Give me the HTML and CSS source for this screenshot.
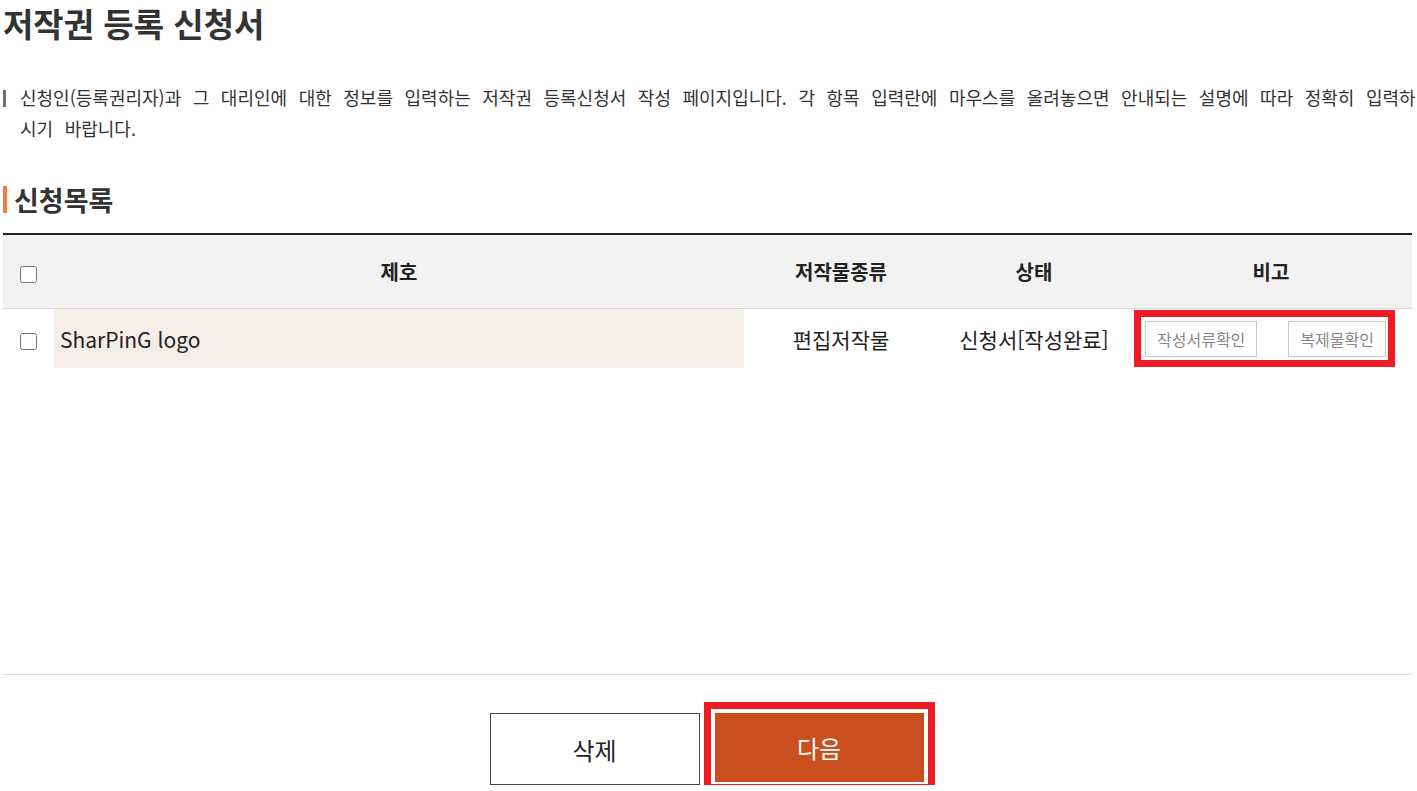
FILE: index.html
```html
<!DOCTYPE html>
<html lang="ko">
<head>
  <meta charset="UTF-8" />
  <title>저작권 등록 신청서</title>
  <link rel="stylesheet" href="styles.css">
</head>
<body>
  <div class="wrap">
    <h1>저작권 등록 신청서</h1>
    <p class="guide">신청인(등록권리자)과 그 대리인에 대한 정보를 입력하는 저작권 등록신청서 작성 페이지입니다. 각 항목 입력란에 마우스를 올려놓으면 안내되는 설명에 따라 정확히 입력하시기 바랍니다.</p>

    <h2 class="sec-title">신청목록</h2>
    <table class="list">
      <colgroup>
        <col class="c-chk" />
        <col class="c-title" />
        <col class="c-type" />
        <col class="c-state" />
        <col class="c-note" />
      </colgroup>
      <thead>
        <tr>
          <th><input type="checkbox" /></th>
          <th>제호</th>
          <th>저작물종류</th>
          <th>상태</th>
          <th>비고</th>
        </tr>
      </thead>
      <tbody>
        <tr>
          <td><input type="checkbox" /></td>
          <td class="title">SharPinG logo</td>
          <td>편집저작물</td>
          <td>신청서[작성완료]</td>
          <td class="note">
            <div class="note-btns">
              <button class="small">작성서류확인</button>
              <button class="small">복제물확인</button>
            </div>
            <span class="mark"></span>
          </td>
        </tr>
      </tbody>
    </table>

    <div class="actions">
      <button class="btn">삭제</button>
      <div class="next">
        <button class="btn primary">다음</button>
        <span class="mark"></span>
      </div>
    </div>
  </div>
</body>
</html>
```

FILE: styles.css
```css
body {
  margin: 0;
  font-family: 'Noto Sans CJK KR', 'Noto Sans', sans-serif;
  color: #333;
  background: #fff;
}
.wrap {
  width: 1409px;
  padding-left: 3px;
}
h1 {
  margin: 0;
  font-size: 33px;
  line-height: 46px;
  font-weight: 700;
  color: #333;
}
.guide {
  margin: 36px -6px 0 0;
  padding-left: 17px;
  font-size: 18px;
  line-height: 31px;
  word-spacing: 6.5px;
  color: #333;
  background: linear-gradient(#66756a, #66756a) no-repeat 0 8px / 3px 17px;
}
.sec-title {
  margin: 42px 0 20px;
  padding-left: 7px;
  border-left: 4px solid #f47b48;
  font-size: 27px;
  line-height: 27px;
  font-weight: 700;
  color: #333;
}
.list {
  width: 100%;
  table-layout: fixed;
  border-collapse: collapse;
  border-top: 2px solid #222;
}
.c-chk { width: 51px; }
.c-title { width: 690px; }
.c-type { width: 194px; }
.c-state { width: 192px; }
.c-note { width: 282px; }
.list th {
  height: 73px;
  padding: 0;
  background: #f2f2f2;
  border-bottom: 1px solid #d6d6d6;
  font-size: 20px;
  font-weight: 700;
  color: #222;
  text-align: center;
}
.list td {
  height: 59px;
  padding: 0;
  font-size: 21px;
  color: #222;
  text-align: center;
}
.list input[type="checkbox"] {
  width: 17px;
  height: 17px;
  margin: 0;
  vertical-align: middle;
}
.list td.title {
  padding-left: 6px;
  background: #f3efe8;
  text-align: left;
}
.list td.note {
  position: relative;
  padding-left: 15px;
  text-align: left;
}
.note-btns {
  display: flex;
  gap: 31px;
}
.small {
  height: 36px;
  padding: 0 11px;
  background: #fff;
  border: 1px solid #c8c8c8;
  font-family: inherit;
  font-size: 16px;
  color: #888;
  cursor: pointer;
}
/* red highlight boxes */
.mark {
  position: absolute;
  border: 7px solid #ed1c24;
  pointer-events: none;
}
.note .mark {
  left: 4px;
  top: 1px;
  width: 247px;
  height: 43px;
}
.next .mark {
  left: -9px;
  top: -9px;
  right: -9px;
  bottom: -7px;
}
.actions {
  margin-top: 306px;
  padding-top: 38px;
  border-top: 1px solid #dcdcd4;
  display: flex;
  justify-content: center;
  align-items: flex-start;
  gap: 13px;
}
.btn {
  width: 210px;
  height: 72px;
  background: #fff;
  border: 1px solid #444;
  font-family: inherit;
  font-size: 24px;
  color: #222;
  cursor: pointer;
}
.next {
  position: relative;
  margin-top: -2px;
}
.btn.primary {
  display: block;
  width: 213px;
  height: 73px;
  background: #cb4e1e;
  border: 2px solid #fff;
  color: #fff;
}
```
